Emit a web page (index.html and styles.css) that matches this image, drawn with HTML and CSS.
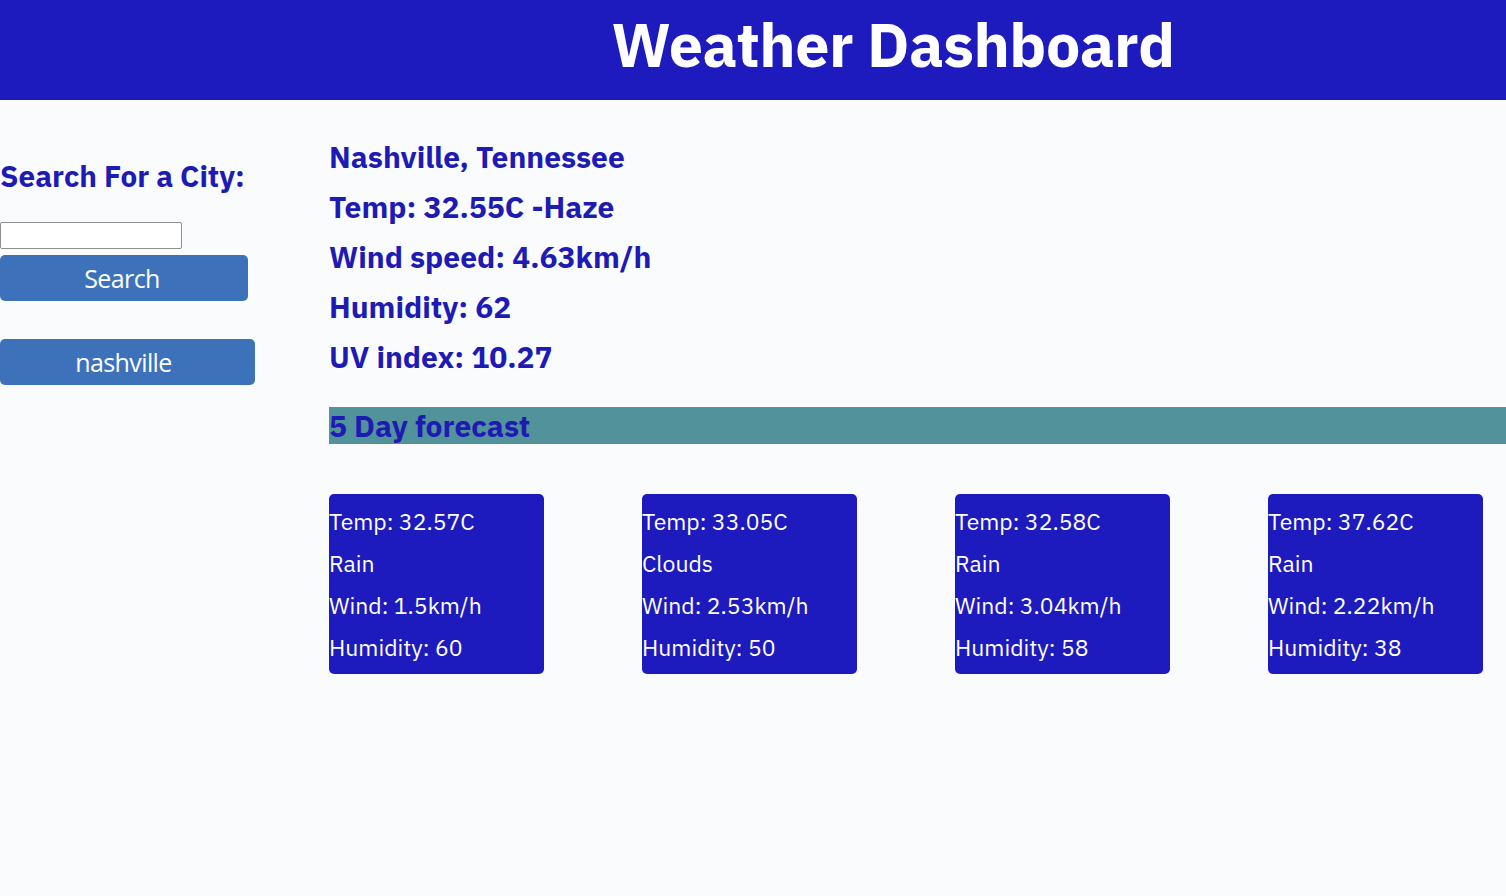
FILE: index.html
```html
<!DOCTYPE html>
<html lang="en">
<head>
<meta charset="utf-8">
<title>Weather Dashboard</title>
<link rel="stylesheet" href="styles.css">
</head>
<body>
<header class="top">
  <h1 class="title">Weather Dashboard</h1>
</header>
<div class="layout">
  <aside class="side">
    <h2 class="side-title">Search For a City:</h2>
    <input class="city-input" type="text">
    <button class="btn btn-search">Search</button>
    <button class="btn btn-history">nashville</button>
  </aside>
  <main class="main">
    <div class="current">
      <p class="cur-line">Nashville, Tennessee</p>
      <p class="cur-line">Temp: 32.55C -Haze</p>
      <p class="cur-line">Wind speed: 4.63km/h</p>
      <p class="cur-line">Humidity: 62</p>
      <p class="cur-line">UV index: 10.27</p>
    </div>
    <h3 class="fc-title">5 Day forecast</h3>
    <div class="cards">
      <div class="card"><p>Temp: 32.57C</p><p>Rain</p><p>Wind: 1.5km/h</p><p>Humidity: 60</p></div>
      <div class="card"><p>Temp: 33.05C</p><p>Clouds</p><p>Wind: 2.53km/h</p><p>Humidity: 50</p></div>
      <div class="card"><p>Temp: 32.58C</p><p>Rain</p><p>Wind: 3.04km/h</p><p>Humidity: 58</p></div>
      <div class="card"><p>Temp: 37.62C</p><p>Rain</p><p>Wind: 2.22km/h</p><p>Humidity: 38</p></div>
    </div>
  </main>
</div>
</body>
</html>
```
FILE: styles.css
```css
* { box-sizing: border-box; }
html, body { margin: 0; padding: 0; }
body {
  background: #f9fbfd;
  font-family: "IBM Plex Sans", "Open Sans", "Noto Sans", sans-serif;
  color: #1e1bb4;
  height: 896px;
  overflow: hidden;
}
.top {
  background: #1e1bbe;
  height: 100px;
  display: flex;
  align-items: center;
  justify-content: center;
  padding-left: 280px;
}
.title {
  margin: 0;
  color: #fff;
  font-size: 61px;
  font-weight: 700;
  letter-spacing: -0.5px;
  line-height: 1;
  padding-bottom: 12px;
}
.layout {
  display: flex;
}
.side {
  width: 329px;
  flex: none;
  padding-top: 58px;
  display: flex;
  flex-direction: column;
  align-items: flex-start;
}
.side-title {
  margin: 0 0 28px;
  font-size: 29.7px;
  font-weight: 700;
  line-height: 36px;
}
.city-input {
  width: 182px;
  height: 27px;
  margin: 0 0 6px;
  border: 1px solid #8f8f8f;
  border-radius: 2px;
  background: #fff;
}
.btn {
  border: none;
  border-radius: 5px;
  background: #3d72bb;
  color: #fff;
  font-family: "Open Sans", sans-serif;
  font-size: 25px;
  letter-spacing: -0.6px;
  height: 46px;
  padding: 0;
}
.btn-search { width: 248px; margin-bottom: 38px; padding-right: 4px; }
.btn-history { width: 255px; padding-right: 8px; }
.main {
  flex: 1;
  padding-top: 32px;
}
.cur-line {
  margin: 0;
  font-size: 30px;
  font-weight: 700;
  line-height: 50px;
}
.current { margin-bottom: 25px; }
.fc-title {
  margin: 0;
  background: #52929a;
  font-size: 30px;
  font-weight: 700;
  line-height: 37px;
  height: 37px;
}
.cards {
  display: flex;
  gap: 98px;
  margin-top: 50px;
}
.card {
  width: 215px;
  height: 180px;
  background: #1e1bbe;
  border-radius: 5px;
  color: #fff;
  padding-top: 6px;
}
.card p {
  margin: 0;
  font-size: 23px;
  line-height: 42px;
}
```
